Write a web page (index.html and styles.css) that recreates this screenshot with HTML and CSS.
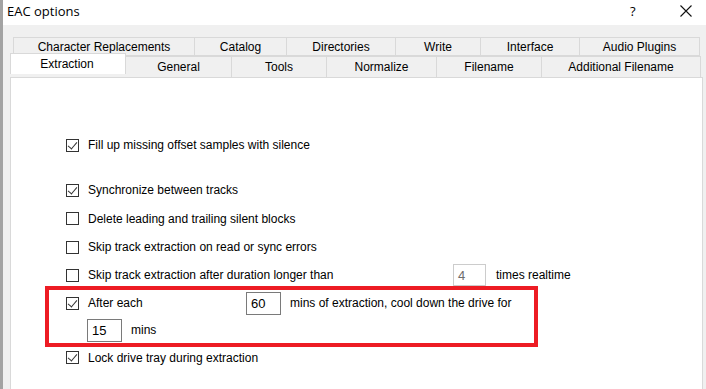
FILE: index.html
```html
<!DOCTYPE html>
<html>
<head>
<meta charset="utf-8">
<link rel="stylesheet" href="styles.css">
</head>
<body>
<div class="window">
  <div class="titlebar">
    <span class="title">EAC options</span>
    <span class="help">?</span>
    <span class="close"><svg width="12" height="12" viewBox="0 0 12 12"><path d="M0.5 0.5 L11.5 11.5 M11.5 0.5 L0.5 11.5" stroke="#111" stroke-width="1.1" fill="none"/></svg></span>
  </div>
  <div class="body">
    <div class="tabs">
      <div class="tabrow top">
        <div class="tab" style="width:182px">Character Replacements</div>
        <div class="tab" style="width:92px">Catalog</div>
        <div class="tab" style="width:109px">Directories</div>
        <div class="tab" style="width:85px">Write</div>
        <div class="tab" style="width:99px">Interface</div>
        <div class="tab" style="width:120px">Audio Plugins</div>
      </div>
      <div class="tabrow bottom">
        <div class="tab active" style="width:116px">Extraction</div>
        <div class="tab" style="width:106px">General</div>
        <div class="tab" style="width:95px">Tools</div>
        <div class="tab" style="width:110px">Normalize</div>
        <div class="tab" style="width:105px">Filename</div>
        <div class="tab" style="width:159px">Additional Filename</div>
      </div>
    </div>
    <div class="panel">
      <div class="row first"><span class="cb checked"></span><span class="label">Fill up missing offset samples with silence</span></div>
      <div class="row sync"><span class="cb checked"></span><span class="label">Synchronize between tracks</span></div>
      <div class="row r29"><span class="cb"></span><span class="label">Delete leading and trailing silent blocks</span></div>
      <div class="row"><span class="cb"></span><span class="label">Skip track extraction on read or sync errors</span></div>
      <div class="row"><span class="cb"></span><span class="label wide">Skip track extraction after duration longer than</span><span class="input disabled">4</span><span class="after">times realtime</span></div>
      <div class="row"><span class="cb checked"></span><span class="label mid">After each</span><span class="input">60</span><span class="after">mins of extraction, cool down the drive for</span></div>
      <div class="row sub r26"><span class="input">15</span><span class="after">mins</span></div>
      <div class="row r29"><span class="cb checked"></span><span class="label">Lock drive tray during extraction</span></div>
      <div class="highlight"></div>
    </div>
  </div>
</div>
</body>
</html>
```

FILE: styles.css
```css
* { box-sizing: border-box; }
html, body { margin: 0; padding: 0; }
body {
  width: 706px;
  height: 389px;
  overflow: hidden;
  background: #fff;
  font-family: "Liberation Sans", Arial, sans-serif;
  font-size: 12px;
  color: #000;
}
.window {
  width: 706px;
  height: 389px;
  display: flex;
  flex-direction: column;
  border-left: 3px solid #a3a3a3;
}
.titlebar {
  height: 25px;
  background: #fff;
  display: flex;
  align-items: center;
  position: relative;
}
.title {
  font-family: "Open Sans", sans-serif;
  font-size: 13px;
  margin-left: 4px;
  margin-top: -3px;
}
.help {
  position: absolute;
  left: 627px;
  top: 2px;
  font-family: "Open Sans", sans-serif;
  font-size: 13px;
}
.close {
  position: absolute;
  left: 677px;
  top: 5px;
  line-height: 0;
}
.body {
  flex: 1;
  background: #f0f0f0;
  padding-top: 12px;
  padding-left: 7px;
  display: flex;
  flex-direction: column;
}
.tabs {
  display: flex;
  flex-direction: column;
}
.tabrow {
  display: flex;
}
.tabrow.top {
  margin-left: 3px;
  height: 19px;
}
.tabrow.bottom {
  height: 21px;
  position: relative;
  z-index: 2;
}
.tab {
  background: #f0f0f0;
  border: 1px solid #d9d9d9;
  border-left: none;
  text-align: center;
  line-height: 19px;
  height: 19px;
}
.tabrow.top .tab:first-child { border-left: 1px solid #d9d9d9; }
.tabrow.bottom .tab {
  height: 21px;
  line-height: 21px;
  border-bottom: none;
}
.tab.active {
  background: #fff;
  border: 1px solid #d9d9d9;
  border-bottom: none;
  height: 25px;
  margin-top: -3px;
  line-height: 21px;
  padding-right: 2px;
}
.panel {
  position: relative;
  flex: 1;
  background: #fff;
  border: 1px solid #d9d9d9;
  border-bottom: none;
  margin-right: 3px;
  padding-left: 55px;
  padding-top: 53px;
}
.row {
  display: flex;
  align-items: center;
  height: 28px;
}
.row.first { margin-bottom: 17px; }
.row.r29 { height: 29px; }
.row.r26 { height: 26px; }
.row.sub { padding-left: 21px; }
.cb {
  width: 13px;
  height: 13px;
  border: 1px solid #333;
  background: #fff;
  flex: none;
  margin-right: 9px;
  position: relative;
}
.cb.checked::after {
  content: "";
  position: absolute;
  left: 3px;
  top: 0px;
  width: 4px;
  height: 8px;
  border-right: 1px solid #333;
  border-bottom: 1px solid #333;
  transform: rotate(40deg);
}
.label.wide { width: 365px; }
.label.mid { width: 158px; }
.input {
  width: 35px;
  height: 23px;
  border: 1px solid #7a7a7a;
  padding-left: 4px;
  line-height: 21px;
  font-size: 13px;
  flex: none;
  margin-right: 9px;
}
.input.disabled {
  width: 33px;
  height: 22px;
  border-color: #cccccc;
  color: #6d6d6d;
  margin-right: 10px;
}
.highlight {
  position: absolute;
  left: 34px;
  top: 208px;
  width: 493px;
  height: 61px;
  border: 4px solid #ed1c24;
}
```
